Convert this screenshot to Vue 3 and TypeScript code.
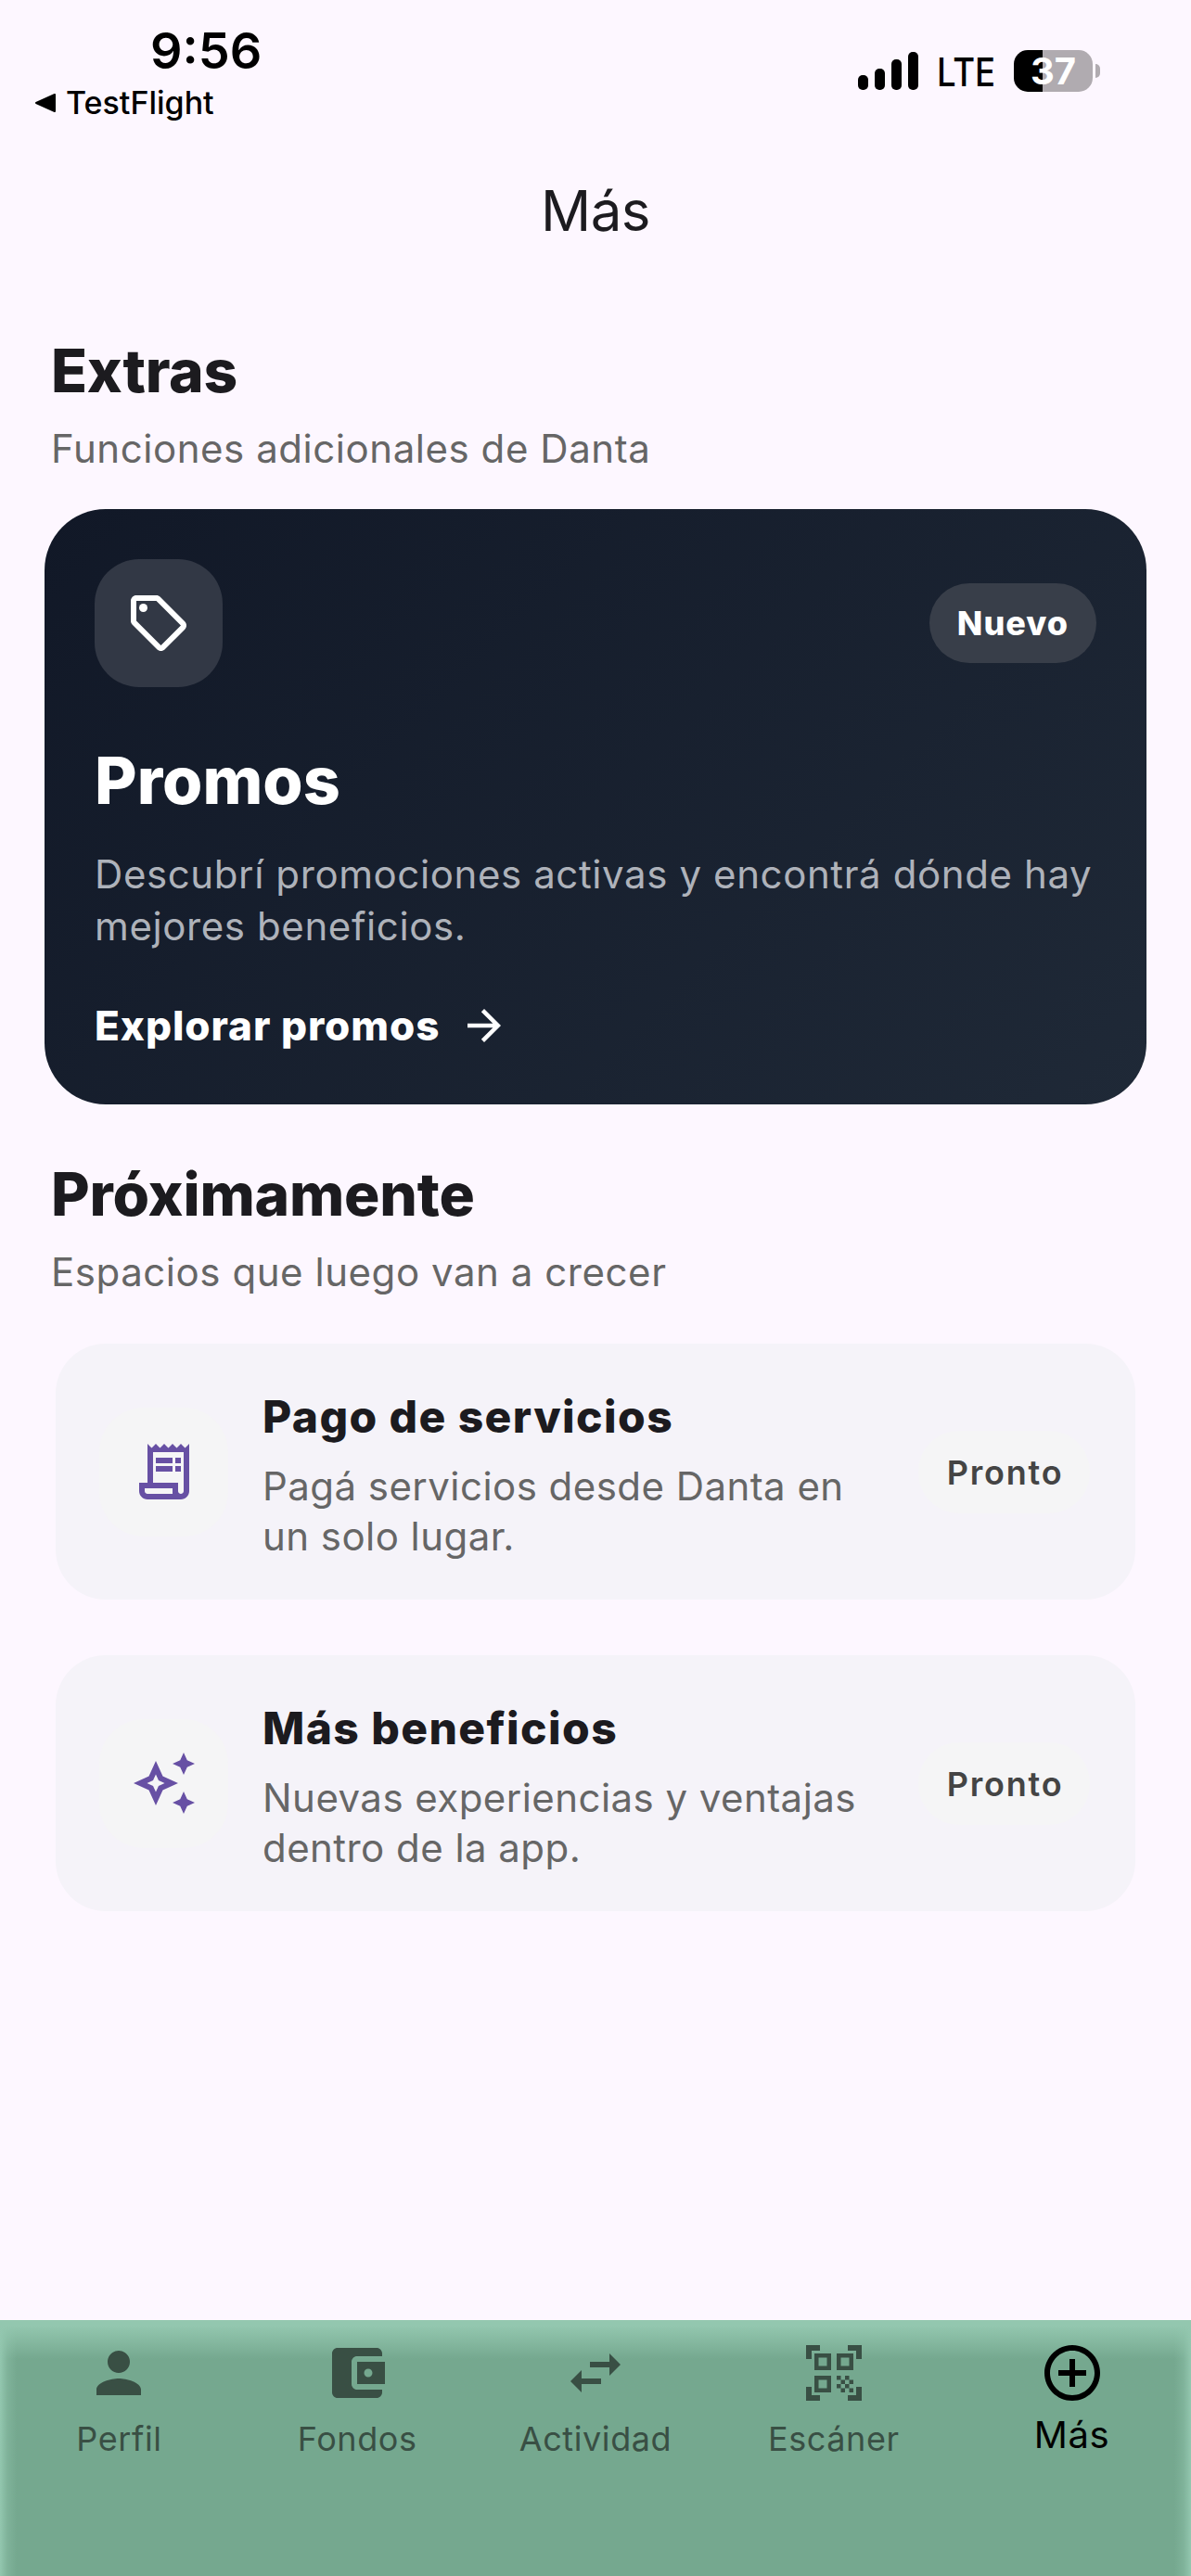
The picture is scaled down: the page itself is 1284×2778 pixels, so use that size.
<script setup lang="ts">
interface Soon { title: string; lines: string[]; icon: 'receipt' | 'spark' }
interface Tab { label: string; paths: string[]; active?: boolean }

const soon: Soon[] = [
  { title: 'Pago de servicios', lines: ['Pagá servicios desde Danta en', 'un solo lugar.'], icon: 'receipt' },
  { title: 'Más beneficios', lines: ['Nuevas experiencias y ventajas', 'dentro de la app.'], icon: 'spark' },
]

const tabs: Tab[] = [
  { label: 'Perfil', paths: ['M12 12c2.21 0 4-1.79 4-4s-1.79-4-4-4-4 1.79-4 4 1.79 4 4 4zm0 2c-2.67 0-8 1.34-8 4v2h16v-2c0-2.66-5.33-4-8-4z'] },
  { label: 'Fondos', paths: ['M21 18v1c0 1.1-.9 2-2 2H5c-1.11 0-2-.9-2-2V5c0-1.1.89-2 2-2h14c1.1 0 2 .9 2 2v1h-9c-1.11 0-2 .9-2 2v8c0 1.1.89 2 2 2h9zm-9-2h10V8H12v8zm4-2.5c-.83 0-1.5-.67-1.5-1.5s.67-1.5 1.5-1.5 1.5.67 1.5 1.5-.67 1.5-1.5 1.5z'] },
  { label: 'Actividad', paths: ['M6.99 11L3 15l3.99 4v-3H14v-2H6.99v-3zM21 9l-3.99-4v3H10v2h7.01v3L21 9z'] },
  { label: 'Escáner', paths: ['M9.5 6.5v3h-3v-3h3M11 5H5v6h6V5zm-1.5 9.5v3h-3v-3h3M11 13H5v6h6v-6zm6.5-6.5v3h-3v-3h3M19 5h-6v6h6V5zm-6 8h1.5v1.5H13V13zm1.5 1.5H16V16h-1.5v-1.5zM16 13h1.5v1.5H16V13zm-3 3h1.5v1.5H13V16zm1.5 1.5H16V19h-1.5v-1.5zM16 16h1.5v1.5H16V16zm1.5-1.5H19V16h-1.5v-1.5zm0 3H19V19h-1.5v-1.5zM22 7h-2V4h-3V2h5v5zm0 15v-5h-2v3h-3v2h5zM2 22h5v-2H4v-3H2v5zM2 2v5h2V4h3V2H2z'] },
  { label: 'Más', active: true, paths: ['M13 7h-2v4H7v2h4v4h2v-4h4v-2h-4V7zm-1-5C6.48 2 2 6.48 2 12s4.48 10 10 10 10-4.48 10-10S17.52 2 12 2zm0 18c-4.41 0-8-3.59-8-8s3.59-8 8-8 8 3.59 8 8-3.59 8-8 8z'] },
]
</script>

<template>
  <div class="screen">
    <header class="status">
      <div class="status-left">
        <span class="time">9:56</span>
        <span class="back">
          <svg class="back-tri" viewBox="0 0 22 20"><path d="M21 1v18L1 10z" stroke="#000" stroke-width="2" stroke-linejoin="round" /></svg>
          TestFlight
        </span>
      </div>
      <div class="status-right">
        <div class="signal"><i class="b1"></i><i class="b2"></i><i class="b3"></i><i class="b4"></i></div>
        <span class="lte">LTE</span>
        <div class="battery"><span>37</span></div>
        <i class="nub"></i>
      </div>
    </header>

    <h1 class="page-title">Más</h1>

    <main class="content">
      <h2 class="section-title">Extras</h2>
      <p class="section-sub">Funciones adicionales de Danta</p>

      <section class="promo">
        <div class="promo-top">
          <div class="promo-icon">
            <svg viewBox="0 0 24 24" class="icon72" fill="#fff">
              <path d="M21.41 11.41l-8.83-8.83c-.37-.37-.88-.58-1.41-.58H4c-1.1 0-2 .9-2 2v7.17c0 .53.21 1.04.59 1.41l8.83 8.83c.78.78 2.05.78 2.83 0l7.17-7.17c.78-.78.78-2.04-.01-2.83zM12.83 20L4 11.17V4h7.17L20 12.83 12.83 20z" />
              <circle cx="6.5" cy="6.5" r="1.5" />
            </svg>
          </div>
          <span class="promo-badge">Nuevo</span>
        </div>
        <h3 class="promo-title">Promos</h3>
        <p class="promo-desc">Descubrí promociones activas y encontrá dónde hay<br />mejores beneficios.</p>
        <div class="promo-cta">
          <span>Explorar promos</span>
          <svg viewBox="0 0 24 24" class="arrow" fill="#fff"><path d="M12 4l-1.41 1.41L16.17 11H4v2h12.17l-5.58 5.59L12 20l8-8z" /></svg>
        </div>
      </section>

      <h2 class="section-title second">Próximamente</h2>
      <p class="section-sub">Espacios que luego van a crecer</p>

      <div class="soon-list">
        <article v-for="item in soon" :key="item.title" class="soon">
          <div class="soon-icon">
            <svg v-if="item.icon === 'receipt'" viewBox="0 0 24 24" class="icon72" fill="#6750A4">
              <path d="M19.5 3.5L18 2l-1.5 1.5L15 2l-1.5 1.5L12 2l-1.5 1.5L9 2 7.5 3.5 6 2v14H3v3c0 1.66 1.34 3 3 3h12c1.66 0 3-1.34 3-3V2l-1.5 1.5zM15 20H6c-.55 0-1-.45-1-1v-1h10v2zm4-1c0 .55-.45 1-1 1s-1-.45-1-1v-3H8V5h11v14z" />
              <path d="M9 7h6v2H9zM16 7h2v2h-2zM9 10h6v2H9zM16 10h2v2h-2z" />
            </svg>
            <svg v-else viewBox="0 0 24 24" class="icon72" fill="#6750A4">
              <path d="M19 9l1.25-2.75L23 5l-2.75-1.25L19 1l-1.25 2.75L15 5l2.75 1.25zm0 6l-1.25 2.75L15 19l2.75 1.25L19 23l1.25-2.75L23 19l-2.75-1.25zm-7.5-5.5L9 4 6.5 9.5 1 12l5.5 2.5L9 20l2.5-5.5L17 12l-5.5-2.5zm-1.51 3.49L9 15.17l-.99-2.18L5.83 12l2.18-.99L9 8.83l.99 2.18 2.18.99-2.18.99z" />
            </svg>
          </div>
          <div class="soon-body">
            <h4 class="soon-title">{{ item.title }}</h4>
            <p class="soon-desc">{{ item.lines[0] }}<br />{{ item.lines[1] }}</p>
          </div>
          <span class="soon-badge">Pronto</span>
        </article>
      </div>
    </main>

    <nav class="tabs">
      <div v-for="tab in tabs" :key="tab.label" class="tab" :class="{ active: tab.active }">
        <svg viewBox="0 0 24 24" class="icon72" fill="currentColor"><path v-for="d in tab.paths" :key="d" :d="d" /></svg>
        <span class="tab-label">{{ tab.label }}</span>
      </div>
    </nav>
  </div>
</template>

<style scoped>
.screen {
  width: 1284px;
  height: 2778px;
  overflow: hidden;
  display: flex;
  flex-direction: column;
  background: #fdf7ff;
  font-family: Inter, "Noto Sans", sans-serif;
  color: #1c1b1f;
}
h1, h2, h3, h4, p { margin: 0; }

.status {
  height: 140px;
  display: flex;
  justify-content: space-between;
  align-items: flex-start;
  color: #000;
}
.status-left {
  padding: 24px 0 0 38px;
  display: flex;
  flex-direction: column;
}
.time {
  margin-left: 124px;
  font-size: 54px;
  line-height: 62px;
  font-weight: 600;
}
.back {
  margin-top: 3px;
  display: flex;
  align-items: center;
  gap: 11px;
  font-size: 34px;
  line-height: 44px;
  font-weight: 500;
}
.back-tri { width: 22px; height: 20px; fill: #000; }
.status-right {
  display: flex;
  align-items: center;
  padding: 53px 98px 0 0;
}
.signal {
  display: flex;
  align-items: flex-end;
  gap: 7px;
  height: 41px;
}
.signal i { width: 11px; border-radius: 5px; background: #000; display: block; }
.b1 { height: 16px; }
.b2 { height: 23px; }
.b3 { height: 33px; }
.b4 { height: 41px; }
.lte {
  margin: 2px 0 0 20px;
  width: 62px;
  font-size: 43px;
  line-height: 45px;
  font-weight: 500;
  white-space: nowrap;
  display: inline-block;
  transform: scaleX(0.85);
  transform-origin: left center;
}
.battery {
  margin-left: 21px;
  width: 85px;
  height: 45px;
  border-radius: 15px;
  background: linear-gradient(90deg, #000 0 36.5%, #b0abb0 36.5% 100%);
  color: #fff;
  font-size: 40px;
  font-weight: 700;
  line-height: 45px;
  text-align: center;
}
.nub {
  display: block;
  margin-left: 3px;
  width: 5px;
  height: 15px;
  border-radius: 0 8px 8px 0;
  background: #b0abb0;
}

.page-title {
  text-align: center;
  font-size: 60px;
  font-weight: 400;
  line-height: 72px;
  margin-top: 51px;
  letter-spacing: -0.5px;
}

.content {
  padding: 99px 48px 0;
  display: flex;
  flex-direction: column;
}
.section-title {
  margin-left: 7px;
  font-size: 64px;
  line-height: 76px;
  font-weight: 800;
  letter-spacing: -0.2px;
  color: #1c1b1f;
}
.section-title.second { margin-top: 59px; }
.section-sub {
  margin: 21px 0 40px 7px;
  font-size: 42px;
  line-height: 50px;
  letter-spacing: 0.55px;
  color: #666;
}

.promo {
  height: 642px;
  border-radius: 66px;
  padding: 54px;
  box-sizing: border-box;
  background: linear-gradient(135deg, #111827 0%, #1f2937 100%);
  color: #fff;
}
.promo-top {
  display: flex;
  justify-content: space-between;
  align-items: center;
}
.promo-icon {
  width: 138px;
  height: 138px;
  border-radius: 48px;
  background: #323845;
  display: flex;
  align-items: center;
  justify-content: center;
}
.icon72 { width: 72px; height: 72px; display: block; }
.promo-badge {
  width: 180px;
  height: 86px;
  border-radius: 43px;
  background: #383e49;
  display: flex;
  align-items: center;
  justify-content: center;
  font-size: 36px;
  font-weight: 800;
  letter-spacing: 1px;
}
.promo-title {
  margin-top: 59px;
  font-size: 70px;
  line-height: 84px;
  font-weight: 800;
  letter-spacing: 0;
}
.promo-desc {
  margin-top: 31px;
  font-size: 42px;
  line-height: 56px;
  letter-spacing: 0.6px;
  white-space: nowrap;
  color: #aeb2ba;
}
.promo-cta {
  margin-top: 52px;
  display: flex;
  align-items: center;
  gap: 21px;
  font-size: 44px;
  line-height: 54px;
  font-weight: 800;
  letter-spacing: 0.95px;
}
.arrow { width: 54px; height: 54px; display: block; }

.soon-list {
  margin: 12px 12px 0;
  display: flex;
  flex-direction: column;
  gap: 60px;
}
.soon {
  height: 276px;
  box-sizing: border-box;
  padding: 0 49px 0 47px;
  border-radius: 54px;
  background: #f5f3f9;
  display: flex;
  align-items: center;
}
.soon-icon {
  flex: none;
  width: 139px;
  height: 139px;
  border-radius: 48px;
  background: #f5f5f6;
  display: flex;
  align-items: center;
  justify-content: center;
}
.soon-body { flex: 1; margin-left: 37px; min-width: 0; padding-top: 7px; }
.soon-title {
  font-size: 48px;
  line-height: 60px;
  font-weight: 800;
  letter-spacing: 1.4px;
  color: #1c1b1f;
}
.soon-desc {
  margin-top: 18px;
  font-size: 42px;
  line-height: 54px;
  letter-spacing: 0.45px;
  color: #666;
}
.soon-badge {
  flex: none;
  width: 185px;
  height: 89px;
  padding: 2px 0 0 2px;
  box-sizing: border-box;
  border-radius: 44px;
  background: #f5f5f6;
  display: flex;
  align-items: center;
  justify-content: center;
  font-size: 36px;
  font-weight: 600;
  letter-spacing: 1.8px;
  color: #444;
}

.tabs {
  margin-top: auto;
  height: 276px;
  box-sizing: border-box;
  display: grid;
  grid-template-columns: repeat(5, 1fr);
  padding-top: 21px;
  background:
    linear-gradient(180deg, #93c7af 0, #93c7af 6px, rgba(147,199,175,0) 42px),
    linear-gradient(90deg, #93c7af 0, rgba(147,199,175,0.35) 8px, rgba(147,199,175,0) 18px),
    linear-gradient(270deg, #93c7af 0, rgba(147,199,175,0.35) 8px, rgba(147,199,175,0) 18px),
    #75a88f;
}
.tab {
  display: flex;
  flex-direction: column;
  align-items: center;
  color: #394f44;
}
.tab-label {
  margin-top: 13px;
  font-size: 36px;
  line-height: 44px;
  letter-spacing: 0.6px;
}
.tab.active { color: #000; }
.tab.active .tab-label { margin-top: 6px; font-size: 40px; line-height: 50px; }
</style>

<style>
html, body { margin: 0; background: #fdf7ff; }
</style>
